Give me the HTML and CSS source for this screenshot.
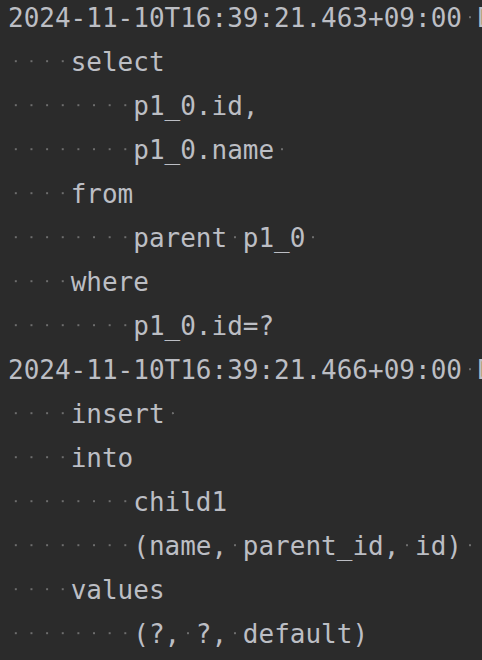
FILE: index.html
```html
<!DOCTYPE html>
<html>
<head>
<meta charset="utf-8">
<link rel="stylesheet" href="styles.css">
</head>
<body>
<div class="console">
<div class="ln">2024-11-10T16:39:21.463+09:00<span class="w"> </span>D</div>
<div class="ln"><span class="w">    </span>select</div>
<div class="ln"><span class="w">        </span>p1_0.id,</div>
<div class="ln"><span class="w">        </span>p1_0.name<span class="w"> </span></div>
<div class="ln"><span class="w">    </span>from</div>
<div class="ln"><span class="w">        </span>parent<span class="w"> </span>p1_0<span class="w"> </span></div>
<div class="ln"><span class="w">    </span>where</div>
<div class="ln"><span class="w">        </span>p1_0.id=?</div>
<div class="ln">2024-11-10T16:39:21.466+09:00<span class="w"> </span>D</div>
<div class="ln"><span class="w">    </span>insert<span class="w"> </span></div>
<div class="ln"><span class="w">    </span>into</div>
<div class="ln"><span class="w">        </span>child1</div>
<div class="ln"><span class="w">        </span>(name,<span class="w"> </span>parent_id,<span class="w"> </span>id)<span class="w"> </span></div>
<div class="ln"><span class="w">    </span>values</div>
<div class="ln"><span class="w">        </span>(?,<span class="w"> </span>?,<span class="w"> </span>default)</div>
</div>
</body>
</html>
```
FILE: styles.css
```css
html, body {
  margin: 0;
  padding: 0;
  background: #2b2b2b;
  overflow: hidden;
}
body {
  width: 482px;
  height: 660px;
}
.console {
  margin-top: -4px;
  padding-left: 8px;
  font-family: "DejaVu Sans Mono", "Liberation Mono", monospace;
  font-size: 26px;
  line-height: 44px;
  color: #bcbec4;
  overflow: hidden;
}
.ln {
  height: 44px;
  white-space: pre;
}
.w {
  background-image: radial-gradient(circle at 50% 14.3px, #6e6e6e 0, #6e6e6e 0.8px, rgba(43,43,43,0) 1.4px);
  background-size: 1ch 100%;
  background-repeat: repeat-x;
}
```
